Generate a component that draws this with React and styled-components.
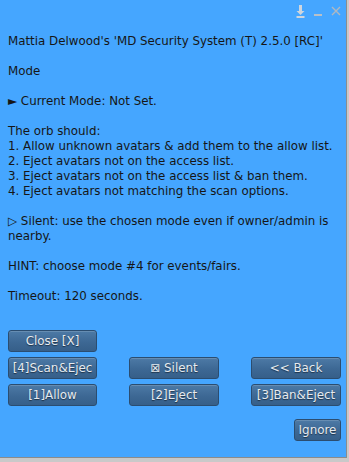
import React from "react";
import { styled, createGlobalStyle } from "styled-components";

const Global = createGlobalStyle`
  html, body {
    margin: 0;
    padding: 0;
    background: #c9c9c9;
  }
  #root {
    width: 349px;
    height: 462px;
  }
`;

const Window = styled.div`
  box-sizing: border-box;
  width: 347px;
  height: 458px;
  background: #45a6ff;
  border-bottom: 1px solid #8c8c8c;
  border-right: 1px solid #8c8c8c;
  display: flex;
  flex-direction: column;
  font-family: "DejaVu Sans", sans-serif;
  color: #161616;
`;

const TitleBar = styled.div`
  height: 24px;
  display: flex;
  justify-content: flex-end;
  align-items: flex-start;
  gap: 6px;
  padding: 3px 4px 0 0;
  box-sizing: border-box;
`;

const IconBtn = styled.div`
  width: 12px;
  height: 16px;
  display: flex;
  align-items: center;
  justify-content: center;
`;

const Body = styled.div`
  padding: 10px 6px 0 8px;
  font-size: 11.85px;
  line-height: 15px;
  white-space: pre-wrap;
`;

const Line = styled.div`
  min-height: 15px;
`;

const Buttons = styled.div`
  margin: 26px 5px 0 8px;
  display: grid;
  grid-template-columns: 89px 90px 90px;
  grid-auto-rows: 22px;
  row-gap: 5px;
  justify-content: space-between;
`;

const Button = styled.button`
  box-sizing: border-box;
  width: ${(p) => p.$w || "100%"};
  height: 22px;
  padding: 0 1px;
  border: 1px solid #2b4d70;
  border-radius: 3px;
  background: linear-gradient(#4d7aa6, #3d6894 55%, #365f89);
  box-shadow: inset 0 1px 0 rgba(255, 255, 255, 0.15);
  color: #e6ebf0;
  text-shadow: 0 1px 1px rgba(0, 0, 0, 0.5);
  font-family: "DejaVu Sans", sans-serif;
  font-size: 11.9px;
  white-space: nowrap;
  overflow: hidden;
  text-align: center;
`;

const Footer = styled.div`
  margin: 13px 5px 0 0;
  display: flex;
  justify-content: flex-end;
`;

const lines = [
  "Mattia Delwood's 'MD Security System (T) 2.5.0 [RC]'",
  "",
  "Mode",
  "",
  "\u25BA Current Mode: Not Set.",
  "",
  "The orb should:",
  "1. Allow unknown avatars & add them to the allow list.",
  "2. Eject avatars not on the access list.",
  "3. Eject avatars not on the access list & ban them.",
  "4. Eject avatars not matching the scan options.",
  "",
  "\u25B7 Silent: use the chosen mode even if owner/admin is",
  "nearby.",
  "",
  "HINT: choose mode #4 for events/fairs.",
  "",
  "Timeout: 120 seconds.",
];

const buttons = [
  "Close [X]",
  null,
  null,
  "[4]Scan&Ejec",
  "\u22A0 Silent",
  "<< Back",
  "[1]Allow",
  "[2]Eject",
  "[3]Ban&Eject",
];

function App() {
  return (
    <>
      <Global />
      <Window>
        <TitleBar>
          <IconBtn>
            <svg width="9" height="14" viewBox="0 0 9 14">
              <path d="M3 1h3v6h2.5L4.5 11 0.5 7H3z" fill="#cfd6de" />
              <rect x="0.5" y="12" width="8" height="2" fill="#cfd6de" />
            </svg>
          </IconBtn>
          <IconBtn>
            <svg width="8" height="14" viewBox="0 0 8 14">
              <rect x="0" y="10" width="8" height="2" fill="#b8c0c8" />
            </svg>
          </IconBtn>
          <IconBtn>
            <svg width="10" height="14" viewBox="0 0 10 14">
              <path d="M1 3l8 8M9 3l-8 8" stroke="#b0b8c0" strokeWidth="1.4" />
            </svg>
          </IconBtn>
        </TitleBar>
        <Body>
          {lines.map((l, i) => (
            <Line key={i}>{l}</Line>
          ))}
        </Body>
        <Buttons>
          {buttons.map((b, i) =>
            b ? <Button key={i}>{b}</Button> : <span key={i} />
          )}
        </Buttons>
        <Footer>
          <Button $w="47px">Ignore</Button>
        </Footer>
      </Window>
    </>
  );
}

export default App;
